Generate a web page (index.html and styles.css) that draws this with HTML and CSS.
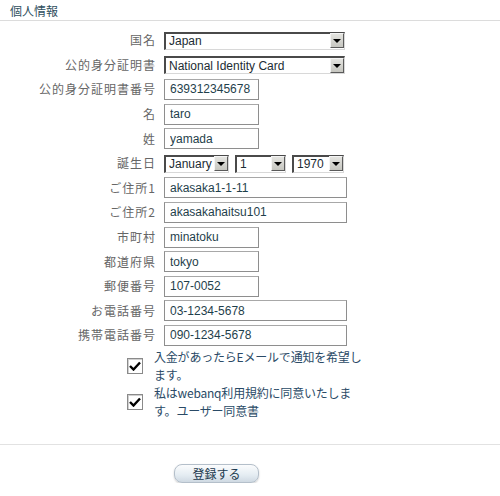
FILE: index.html
```html
<!doctype html>
<html lang="ja">
<head>
	<meta charset="UTF-8">
	<title>個人情報</title>
	<link rel="stylesheet" href="styles.css">
</head>
<body>
	<h2 class="heading">個人情報</h2>

	<form class="form" action="#">
		<div class="fields">
			<label class="lbl">国名</label>
			<span class="sel w-long"><select><option>Japan</option></select><span class="arrow"></span></span>

			<label class="lbl">公的身分証明書</label>
			<span class="sel w-long"><select><option>National Identity Card</option></select><span class="arrow"></span></span>

			<label class="lbl">公的身分証明書番号</label>
			<input type="text" class="txt w-short" value="639312345678">

			<label class="lbl">名</label>
			<input type="text" class="txt w-short" value="taro">

			<label class="lbl">姓</label>
			<input type="text" class="txt w-short" value="yamada">

			<label class="lbl">誕生日</label>
			<div class="birth">
				<span class="sel w-month"><select><option>January</option></select><span class="arrow"></span></span>
				<span class="sel w-day"><select><option>1</option></select><span class="arrow"></span></span>
				<span class="sel w-year"><select><option>1970</option></select><span class="arrow"></span></span>
			</div>

			<label class="lbl">ご住所1</label>
			<input type="text" class="txt w-long" value="akasaka1-1-11">

			<label class="lbl">ご住所2</label>
			<input type="text" class="txt w-long" value="akasakahaitsu101">

			<label class="lbl">市町村</label>
			<input type="text" class="txt w-short" value="minatoku">

			<label class="lbl">都道府県</label>
			<input type="text" class="txt w-short" value="tokyo">

			<label class="lbl">郵便番号</label>
			<input type="text" class="txt w-short" value="107-0052">

			<label class="lbl">お電話番号</label>
			<input type="text" class="txt w-long" value="03-1234-5678">

			<label class="lbl">携帯電話番号</label>
			<input type="text" class="txt w-long" value="090-1234-5678">
		</div>

		<div class="checks">
			<div class="check">
				<span class="box"><svg width="12" height="10" viewBox="0 0 12 10"><path d="M1 5 L4.5 8.5 L11 1.5" fill="none" stroke="#000" stroke-width="2.4"/></svg></span>
				<p class="check-text">入金があったらEメールで通知を希望し<br>ます。</p>
			</div>
			<div class="check">
				<span class="box"><svg width="12" height="10" viewBox="0 0 12 10"><path d="M1 5 L4.5 8.5 L11 1.5" fill="none" stroke="#000" stroke-width="2.4"/></svg></span>
				<p class="check-text">私はwebanq利用規約に同意いたしま<br>す。ユーザー同意書</p>
			</div>
		</div>

		<div class="actions">
			<button type="submit" class="btn">登録する</button>
		</div>
	</form>
</body>
</html>
```

FILE: styles.css
```css
body {
	margin: 0;
	background: #fff;
	font-family: "Noto Sans CJK JP", "Liberation Sans", sans-serif;
	font-size: 12px;
	color: #555;
}

.heading {
	margin: 0;
	height: 20px;
	padding-left: 10px;
	font-size: 12px;
	font-weight: normal;
	line-height: 22px;
	color: #2f4f5e;
	border-bottom: 1px solid #dcdcdc;
}

.form { margin: 0; }

.fields {
	display: grid;
	grid-template-columns: 156px auto;
	grid-auto-rows: 24.6px;
	column-gap: 8px;
	align-items: center;
	justify-items: start;
	margin-top: 7px;
}

.lbl {
	justify-self: end;
	color: #666;
	letter-spacing: 1px;
	line-height: 14px;
}

.txt {
	box-sizing: border-box;
	height: 21px;
	margin: 0;
	padding: 0 5px;
	font-family: "Liberation Sans", "Noto Sans", sans-serif;
	font-size: 12px;
	color: #1f3f4c;
	background: #fff;
	border: 1px solid #8e8e8e;
	border-top-color: #a8a8a8;
}
.w-short { width: 95px; }
.w-long { width: 183px; }

.sel {
	position: relative;
	display: inline-block;
	height: 18px;
}
.sel select {
	appearance: none;
	-webkit-appearance: none;
	box-sizing: border-box;
	width: 100%;
	height: 18px;
	margin: 0;
	padding: 0 0 0 3px;
	font-family: "Liberation Sans", "Noto Sans", sans-serif;
	font-size: 12px;
	line-height: 14px;
	color: #1c2c34;
	background: #fff;
	border-style: solid;
	border-width: 2px 1px 1px 2px;
	border-color: #4a4a4a #d8d8d8 #d8d8d8 #4a4a4a;
	border-radius: 0;
}
.sel .arrow {
	position: absolute;
	top: 2px;
	right: 1px;
	width: 14px;
	height: 15px;
	box-sizing: border-box;
	background: linear-gradient(#e4e4e0, #c6c6c0);
	border: 1px solid;
	border-color: #f4f4f4 #5a5a5a #5a5a5a #f4f4f4;
}
.sel .arrow::after {
	content: "";
	position: absolute;
	left: 2px;
	top: 5px;
	border-left: 4px solid transparent;
	border-right: 4px solid transparent;
	border-top: 4px solid #000;
}
.sel.w-long { width: 181px; }
.w-month { width: 65px; }
.w-day { width: 51px; }
.w-year { width: 52px; }

.birth {
	display: flex;
	gap: 6px;
}

.checks {
	display: flex;
	flex-direction: column;
	margin-top: 0;
	padding-left: 127px;
}
.check {
	display: flex;
	align-items: center;
	gap: 11px;
	height: 36px;
}
.box {
	box-sizing: border-box;
	width: 16px;
	height: 16px;
	display: flex;
	align-items: center;
	justify-content: center;
	background: #fff;
	border: 1px solid #8a8a8a;
	box-shadow: inset 1px 1px 0 #d0d0d0;
}
.check-text {
	margin: 0;
	line-height: 18px;
	letter-spacing: -0.2px;
	white-space: nowrap;
	color: #2a4a66;
}

.actions {
	margin-top: 24px;
	border-top: 1px solid #e2e2e2;
	padding-top: 19px;
	padding-left: 174px;
}
.btn {
	width: 85px;
	height: 19px;
	padding: 0;
	font-family: "Noto Sans CJK JP", sans-serif;
	font-size: 12px;
	line-height: 15px;
	color: #1c3a4e;
	background: linear-gradient(#fbfcfd, #e4ecf2 60%, #cfd9e2);
	border: 1px solid #b4bfca;
	border-radius: 8px;
	box-shadow: 0 1px 2px rgba(0, 0, 0, 0.2);
}
```
